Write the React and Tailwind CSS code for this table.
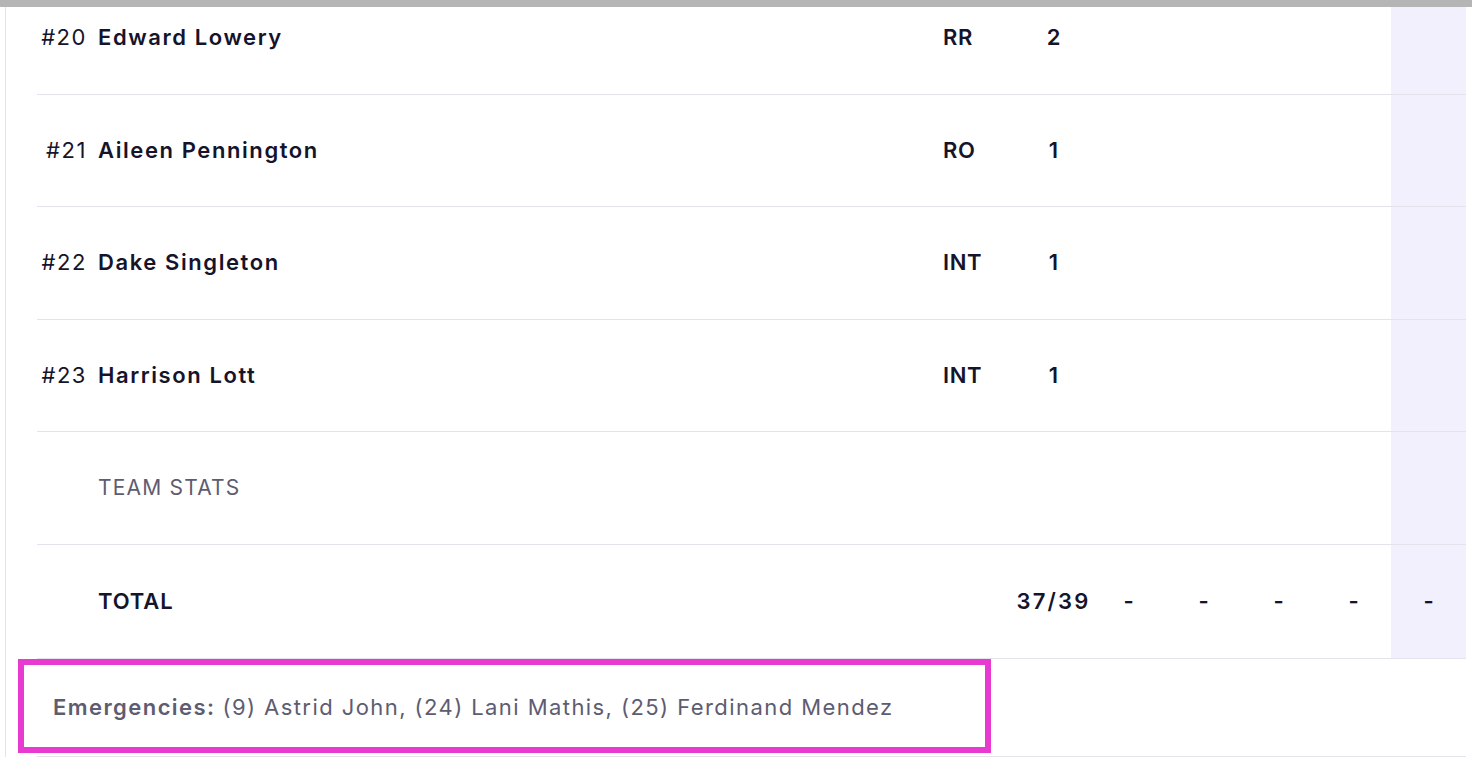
import React from "react";

const players = [
  { no: "#20", name: "Edward Lowery", pos: "RR", count: "2" },
  { no: "#21", name: "Aileen Pennington", pos: "RO", count: "1" },
  { no: "#22", name: "Dake Singleton", pos: "INT", count: "1" },
  { no: "#23", name: "Harrison Lott", pos: "INT", count: "1" },
];

const font = { fontFamily: "Inter, 'Noto Sans', sans-serif" };

const StatCells = ({ values = ["", "", "", "", ""] }) => (
  <>
    {values.map((v, i) => (
      <div
        key={i}
        className={
          "w-[75px] h-full flex items-center justify-center font-semibold " +
          (i === 4 ? "bg-[#f2f0fd]" : "")
        }
      >
        {v}
      </div>
    ))}
  </>
);

const App = () => {
  return (
    <div className="relative h-[757px] overflow-hidden bg-white text-[#15142b]" style={font}>
      {/* fixed top bar */}
      <div className="h-[7px] bg-[#b5b5b5]" />

      <div className="flex h-[750px]">
        <div className="ml-[5px] w-px bg-[#e4e4e4]" />
        <div className="ml-[31px] w-[1429px] overflow-hidden">
          <div className="-mt-[25px]">
            {/* ===== PLAYER ROWS ===== */}
            {players.map((p) => (
              <div key={p.no} className="flex items-center h-[112.5px] border-b border-[#e4e2ea] text-[22px]">
                <div className="w-[50px] text-right tracking-[0.07em]">{p.no}</div>
                <div className="w-[854px] pl-[11px] font-semibold tracking-[0.072em]">{p.name}</div>
                <div className="w-[75px] pl-[2px] font-semibold tracking-[0.03em]">{p.pos}</div>
                <div className="w-[75px] text-center font-semibold">{p.count}</div>
                <StatCells />
              </div>
            ))}

            {/* ===== TEAM STATS ===== */}
            <div className="flex items-center h-[112.5px] border-b border-[#e4e2ea]">
              <div className="w-[50px]" />
              <div className="w-[1004px] pl-[11px] text-[#5e5c70] text-[21px] tracking-[0.057em]">TEAM STATS</div>
              <StatCells />
            </div>

            {/* ===== TOTAL ===== */}
            <div className="flex items-center h-[114.5px] border-b border-[#e4e2ea] text-[22px]">
              <div className="w-[50px]" />
              <div className="w-[929px] pl-[11px] font-semibold tracking-[0.04em]">TOTAL</div>
              <div className="w-[75px] text-center font-semibold tracking-[0.1em]">37/39</div>
              <StatCells values={["-", "-", "-", "-", "-"]} />
            </div>

            {/* ===== EMERGENCIES ===== */}
            <div className="flex items-center h-[98px] border-b border-[#e4e2ea] pl-[16px] text-[22px] text-[#5e5c70] tracking-[0.065em]">
              <span className="font-semibold mr-[7px]">Emergencies:</span>
              (9) Astrid John, (24) Lani Mathis, (25) Ferdinand Mendez
            </div>
          </div>
        </div>
      </div>

      {/* highlight overlay */}
      <div className="absolute left-[18px] top-[659px] w-[973px] h-[94px] border-[6px] border-[#e83ad0]" />
    </div>
  );
};

export default App;
